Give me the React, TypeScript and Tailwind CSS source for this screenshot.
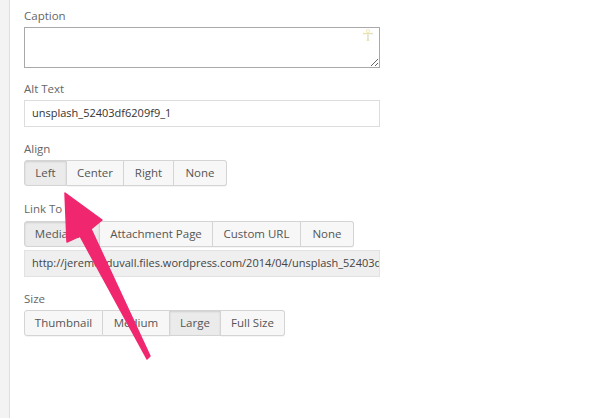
import React from 'react';

type Opt = { label: string; w: string; active?: boolean };

const alignOpts: Opt[] = [
    { label: 'Left', w: 'w-[43px]', active: true },
    { label: 'Center', w: 'w-[57px]' },
    { label: 'Right', w: 'w-[50px]' },
    { label: 'None', w: 'w-[53px]' },
];

const linkOpts: Opt[] = [
    { label: 'Media File', w: 'w-[76px]', active: true },
    { label: 'Attachment Page', w: 'w-[113px]' },
    { label: 'Custom URL', w: 'w-[88px]' },
    { label: 'None', w: 'w-[53px]' },
];

const sizeOpts: Opt[] = [
    { label: 'Thumbnail', w: 'w-[79px]' },
    { label: 'Medium', w: 'w-[67px]' },
    { label: 'Large', w: 'w-[51px]', active: true },
    { label: 'Full Size', w: 'w-[64px]' },
];

// segmented button row, like the wp media settings
const ButtonGroup: React.FC<{ options: Opt[] }> = ({ options }) => (
    <div className="flex h-[26px]">
        {options.map((o, i) => (
            <button
                key={o.label}
                className={`${o.w} h-[26px] text-[11.5px] leading-none text-[#555] border border-[#d4d4d4] ${i > 0 ? 'border-l-0' : ''} ${i === 0 ? 'rounded-l-[3px]' : ''} ${i === options.length - 1 ? 'rounded-r-[3px]' : ''} ${o.active ? 'bg-[#ebebeb] border-[#bdbdbd] shadow-[inset_0_1px_2px_rgba(0,0,0,0.12)]' : 'bg-[#f7f7f7] shadow-[0_1px_0_rgba(0,0,0,0.04)]'}`}
            >
                {o.label}
            </button>
        ))}
    </div>
);

const Label: React.FC<{ children: React.ReactNode; className?: string }> = ({ children, className }) => (
    <div className={`text-[11.5px] leading-[18px] text-[#666] ${className ?? ''}`}>{children}</div>
);

export default function App() {
    return (
        <div className="relative w-[600px] h-[418px] bg-white overflow-hidden flex" style={{ fontFamily: '"Open Sans", "Liberation Sans", sans-serif' }}>
            <div className="w-[10px] h-full bg-[#f3f3f3] border-r border-[#dedede] shrink-0" />

            <div className="pl-[14px] pt-[7px] w-[370px]">
                <Label>Caption</Label>
                <div className="relative mt-[2px]">
                    <textarea className="block w-[356px] h-[41px] border border-[#a9a9a9] bg-white outline-none resize" />
                    <span className="absolute right-[6px] top-[1px] text-[16px] leading-none text-[#e4e0a8]" style={{ fontFamily: '"DejaVu Sans", sans-serif' }}>☥</span>
                </div>

                <Label className="mt-[12px]">Alt Text</Label>
                <div className="mt-[2px] w-[356px] h-[27px] border border-[#dddddd] flex items-center px-[7px] text-[11px] text-[#333]">
                    unsplash_52403df6209f9_1
                </div>

                <Label className="mt-[13px]">Align</Label>
                <div className="mt-[2px]">
                    <ButtonGroup options={alignOpts} />
                </div>

                <Label className="mt-[14px]">Link To</Label>
                <div className="mt-[3px]">
                    <ButtonGroup options={linkOpts} />
                </div>
                <div className="mt-[3px] w-[356px] h-[27px] border border-[#e2e2e2] bg-[#efefef] flex items-center px-[7px] text-[11px] text-[#444] overflow-hidden whitespace-nowrap">
                    http://jeremeyduvall.files.wordpress.com/2014/04/unsplash_52403df6209f9_1.jpg
                </div>

                <Label className="mt-[13px]">Size</Label>
                <div className="mt-[2px]">
                    <ButtonGroup options={sizeOpts} />
                </div>
            </div>

            {/* pink annotation arrow */}
            <svg className="absolute left-0 top-0 z-20 pointer-events-none" width="600" height="418" viewBox="0 0 600 418">
                <polygon
                    points="65,193 102,220 91,229 150,356 147,359 80,236 67,242"
                    fill="#f0276f"
                    stroke="#f0276f"
                    strokeWidth="1.5"
                    strokeLinejoin="round"
                />
            </svg>
        </div>
    );
}
